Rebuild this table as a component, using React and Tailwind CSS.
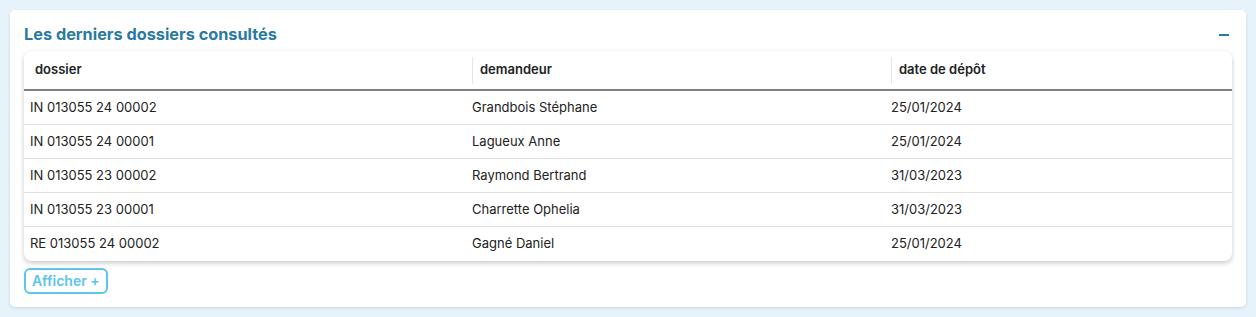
export default function App() {
  const rows = [
    ["IN 013055 24 00002", "Grandbois Stéphane", "25/01/2024"],
    ["IN 013055 24 00001", "Lagueux Anne", "25/01/2024"],
    ["IN 013055 23 00002", "Raymond Bertrand", "31/03/2023"],
    ["IN 013055 23 00001", "Charrette Ophelia", "31/03/2023"],
    ["RE 013055 24 00002", "Gagné Daniel", "25/01/2024"],
  ];
  return (
    <div className="min-h-[317px] bg-[#e6f3fa] p-[10px] font-['Inter',sans-serif]">
      <div className="bg-white rounded-[5px] shadow-[0_1px_3px_rgba(0,0,0,0.12)] pt-[13px] px-[14px] pb-[13px]">
        <div className="flex items-center justify-between h-[22px]">
          <h2 className="text-[16.3px] font-bold text-[#2a7aa0] leading-[22px]">Les derniers dossiers consultés</h2>
          <div className="w-[10px] h-[2px] bg-[#2a7aa0] mr-[3px] mt-[1px]"></div>
        </div>
        <div className="mt-[6px] rounded-[8px] bg-white shadow-[0_2px_5px_rgba(0,0,0,0.22)] overflow-hidden">
          <div className="grid grid-cols-[448px_419px_1fr] h-[40px] items-center border-b-2 border-[#7f7f7f] text-[13px] font-semibold text-[#222]">
            <div className="pl-[11px]">dossier</div>
            <div className="flex items-center h-[27px] border-l border-[#e5e5e5] pl-[7px]">demandeur</div>
            <div className="flex items-center h-[27px] border-l border-[#e5e5e5] pl-[7px]">date de dépôt</div>
          </div>
          {rows.map((r, i) => (
            <div
              key={i}
              className={
                "grid grid-cols-[448px_419px_1fr] h-[34px] items-center text-[13px] text-[#222] " +
                (i < rows.length - 1 ? "border-b border-[#e0e0e0]" : "")
              }
            >
              <div className="pl-[6px]">{r[0]}</div>
              <div>{r[1]}</div>
              <div>{r[2]}</div>
            </div>
          ))}
        </div>
        <div className="mt-[7px]">
          <button className="h-[26px] px-[6px] rounded-[6px] border-2 border-[#5cc4ee] text-[#5cc4ee] text-[14px] font-semibold leading-none">
            Afficher +
          </button>
        </div>
      </div>
    </div>
  );
}
